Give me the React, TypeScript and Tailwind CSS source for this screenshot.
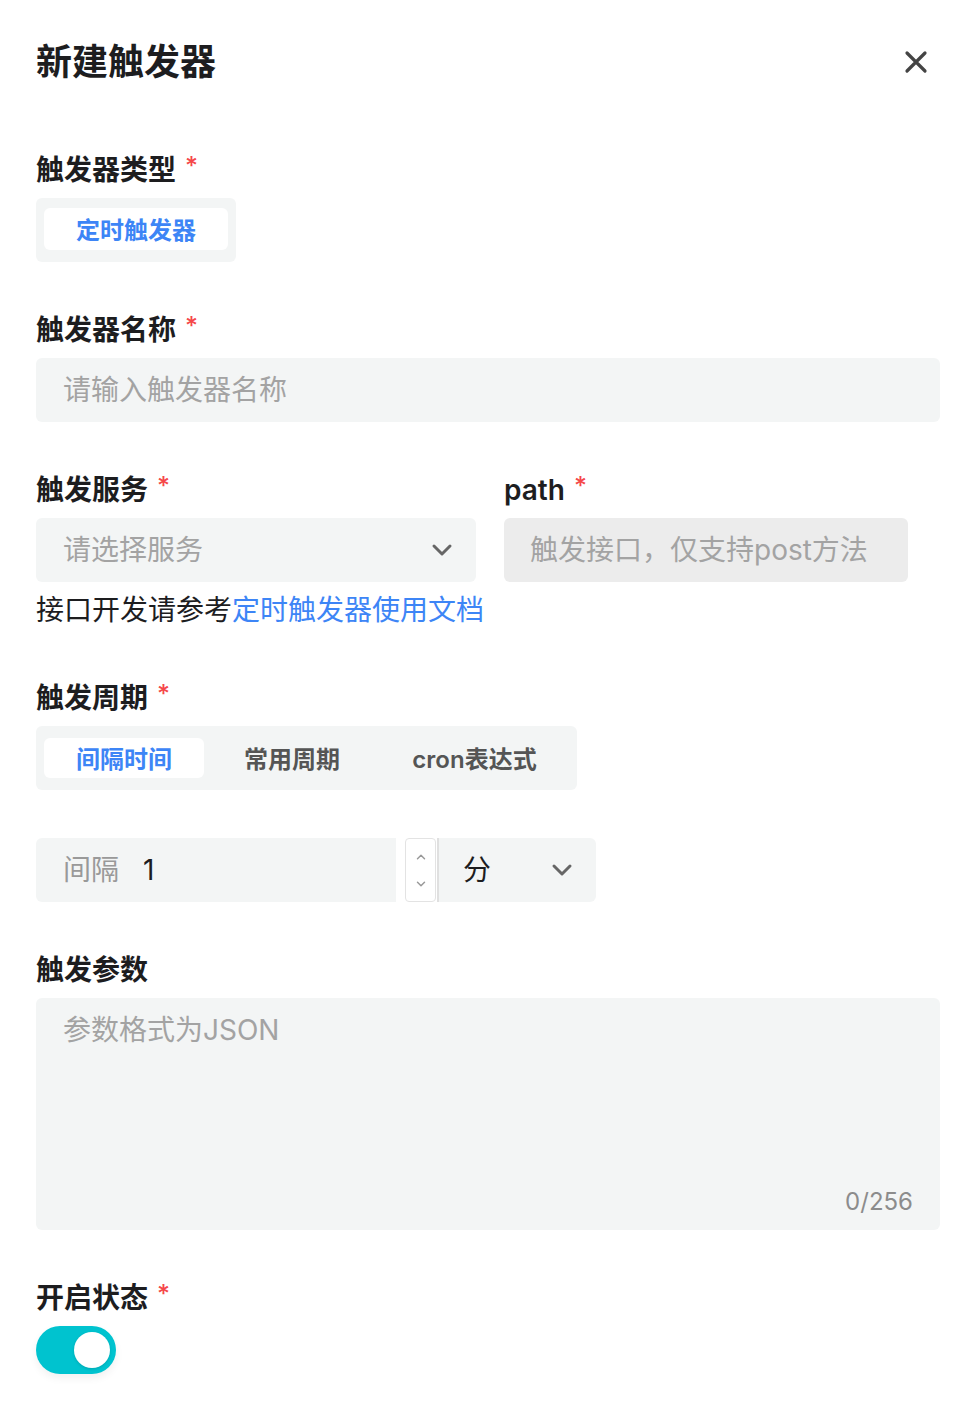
import { useState } from 'react';

const font = { fontFamily: 'Inter, "Noto Sans CJK SC", sans-serif' };

function Label({ text, required = true }: { text: string; required?: boolean }) {
  return (
    <div className="flex h-[40px] items-center text-[28px] font-semibold text-[#1d1d1f]">
      <span>{text}</span>
      {required && <span className="ml-[9px] -mt-[6px] text-[25px] font-medium text-[#f5484a]">*</span>}
    </div>
  );
}

function Chevron({ className }: { className?: string }) {
  return (
    <svg viewBox="0 0 24 24" className={className} fill="none" stroke="currentColor" strokeWidth="3" strokeLinecap="round" strokeLinejoin="round">
      <path d="M4 8l8 8 8-8" />
    </svg>
  );
}

export default function App() {
  const [tab, setTab] = useState(0);
  const [on, setOn] = useState(true);
  const tabs = [
    { label: '间隔时间', w: 'w-[160px]' },
    { label: '常用周期', w: 'w-[160px]' },
    { label: 'cron表达式', w: 'w-[189px]' },
  ];

  return (
    <div className="min-h-screen bg-white pl-[36px] pr-[24px]" style={font}>
      <div className="flex h-[124px] items-center justify-between">
        <h1 className="text-[36px] font-bold text-[#1d1d1f]">新建触发器</h1>
        <svg viewBox="0 0 24 24" className="mr-[12px] h-[24px] w-[24px] text-[#444]" fill="none" stroke="currentColor" strokeWidth="3.2" strokeLinecap="round">
          <path d="M3 3l18 18M21 3L3 21" />
        </svg>
      </div>

      <div className="mt-[26px]">
        <Label text="触发器类型" />
        <div className="mt-[8px] inline-flex rounded-md bg-[#f3f5f5] px-[8px] pt-[10px] pb-[12px]">
          <div className="flex h-[42px] w-[184px] items-center justify-center rounded-md bg-white pt-[3px] text-[24px] font-semibold text-[#3d85f6]">
            定时触发器
          </div>
        </div>
      </div>

      <div className="mt-[48px]">
        <Label text="触发器名称" />
        <div className="mt-[8px] flex h-[64px] items-center rounded-md bg-[#f3f5f5] px-[27px] text-[28px] text-[#a3a3a3]">
          请输入触发器名称
        </div>
      </div>

      <div className="mt-[48px] flex gap-[28px]">
        <div className="w-[440px]">
          <Label text="触发服务" />
          <div className="mt-[8px] flex h-[64px] items-center justify-between rounded-md bg-[#f3f5f5] pl-[27px] pr-[22px] text-[28px] text-[#a3a3a3]">
            <span>请选择服务</span>
            <Chevron className="h-[24px] w-[24px] text-[#666]" />
          </div>
        </div>
        <div className="w-[404px]">
          <Label text="path" />
          <div className="mt-[8px] flex h-[64px] items-center rounded-md bg-[#ececec] px-[26px] text-[28px] text-[#a3a3a3]">
            触发接口，仅支持post方法
          </div>
        </div>
      </div>
      <div className="mt-[8px] flex h-[40px] items-center text-[28px] text-[#1d1d1f]">
        接口开发请参考<span className="text-[#3d85f6]">定时触发器使用文档</span>
      </div>

      <div className="mt-[48px]">
        <Label text="触发周期" />
        <div className="mt-[8px] inline-flex gap-[8px] rounded-md bg-[#f3f5f5] px-[8px] py-[12px]">
          {tabs.map((t, i) => (
            <button
              key={t.label}
              onClick={() => setTab(i)}
              className={
                'flex h-[40px] items-center justify-center rounded-md pt-[3px] text-[24px] font-semibold ' +
                t.w +
                (tab === i ? ' bg-white text-[#3d85f6]' : ' text-[#555]')
              }
            >
              {t.label}
            </button>
          ))}
        </div>
      </div>

      <div className="mt-[48px] flex h-[64px] items-stretch">
        <div className="flex w-[360px] items-center rounded-l-md bg-[#f3f5f5] px-[27px] text-[28px]">
          <span className="text-[#999]">间隔</span>
          <span className="ml-[24px] text-[#1d1d1f]">1</span>
        </div>
        <div className="ml-[9px] flex w-[31px] flex-col items-center justify-around rounded border border-[#e3e3e3] bg-white py-[4px] text-[#999]">
          <svg viewBox="0 0 24 24" className="h-[14px] w-[14px]" fill="none" stroke="currentColor" strokeWidth="2.5" strokeLinecap="round" strokeLinejoin="round">
            <path d="M6 15l6-6 6 6" />
          </svg>
          <svg viewBox="0 0 24 24" className="h-[14px] w-[14px]" fill="none" stroke="currentColor" strokeWidth="2.5" strokeLinecap="round" strokeLinejoin="round">
            <path d="M6 9l6 6 6-6" />
          </svg>
        </div>
        <div className="ml-[1px] flex w-[159px] items-center justify-between rounded-r-md border-l-2 border-[#e0e0e0] bg-[#f3f5f5] pl-[24px] pr-[22px] text-[28px] text-[#1d1d1f]">
          <span>分</span>
          <Chevron className="h-[24px] w-[24px] text-[#666]" />
        </div>
      </div>

      <div className="mt-[48px]">
        <Label text="触发参数" required={false} />
        <div className="mt-[8px] flex h-[232px] flex-col justify-between rounded-md bg-[#f3f5f5] pl-[27px] pr-[27px] pt-[12px] pb-[8px]">
          <div className="h-[40px] text-[28px] leading-[40px] text-[#a3a3a3]">参数格式为JSON</div>
          <div className="self-end text-[24px] leading-[40px] text-[#8c8c8c]">0/256</div>
        </div>
      </div>

      <div className="mt-[48px] pb-[32px]">
        <Label text="开启状态" />
        <button
          onClick={() => setOn(!on)}
          className={
            'mt-[8px] flex h-[48px] w-[80px] items-center rounded-full px-[6px] shadow-[0_4px_8px_rgba(0,0,0,0.06)] ' +
            (on ? 'justify-end bg-[#00c3cf]' : 'justify-start bg-[#ddd]')
          }
        >
          <span className="h-[36px] w-[36px] rounded-full bg-white shadow-[0_1px_3px_rgba(0,0,0,0.15)]" />
        </button>
      </div>
    </div>
  );
}
